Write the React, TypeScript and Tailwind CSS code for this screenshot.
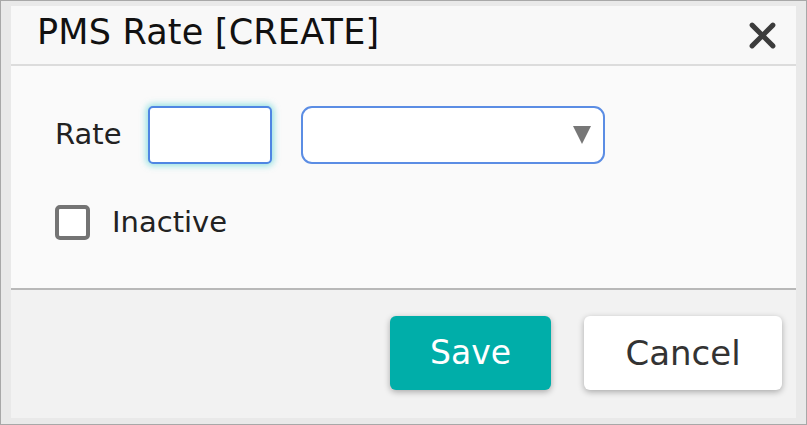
import React from 'react';

const font = { fontFamily: '"DejaVu Sans", "Open Sans", sans-serif' };

const CloseIcon: React.FC = () => (
  <svg width="27" height="27" viewBox="0 0 26 26" className="block">
    <path d="M3 3 L23 23 M23 3 L3 23" stroke="#3c3c3c" strokeWidth="4.8" strokeLinecap="round" />
  </svg>
);

const App: React.FC = () => {
  return (
    <div
      className="w-[807px] h-[425px] box-border bg-[#e9e9e9] border border-[#a8a8a8] pl-[10px] pr-[10px] pt-[5px] pb-[6px] overflow-hidden"
      style={font}
    >
      <div className="h-full flex flex-col">
        {/* header */}
        <div className="h-[60px] shrink-0 bg-[#f8f8f8] border-b-2 border-[#dcdcdc] flex items-center justify-between pl-[26px] pr-[20px] pb-[5px]">
          <h1 className="text-[35px] leading-none text-[#111] font-normal tracking-[0.2px]">PMS Rate [CREATE]</h1>
          <button className="p-0 mt-[6px]">
            <CloseIcon />
          </button>
        </div>

        {/* body */}
        <div className="h-[222px] shrink-0 bg-[#fafafa] pl-[44px] pt-[40px]">
          <div className="flex items-center">
            <label className="text-[29px] text-[#222] w-[93px]">Rate</label>
            <input
              type="text"
              className="w-[124px] h-[58px] rounded-[5px] border-2 border-[#4f86e3] bg-white outline-none shadow-[0_0_6px_2px_rgba(70,205,205,0.55)]"
            />
            <div className="ml-[29px] w-[304px] h-[58px] rounded-[11px] border-2 border-[#5b8de4] bg-white flex items-center justify-end pr-[12px]">
              <svg width="18" height="18" viewBox="0 0 18 18">
                <path d="M0 0 H18 L9 18 Z" fill="#777" />
              </svg>
            </div>
          </div>
          <div className="flex items-center mt-[37px]">
            <span className="w-[35px] h-[35px] rounded-[5px] border-[4px] border-[#747474] bg-white box-border blur-[0.6px]" />
            <span className="ml-[22px] text-[29px] text-[#222]">Inactive</span>
          </div>
        </div>

        {/* footer */}
        <div className="flex-1 bg-[#f2f2f2] border-t-2 border-[#b8b8b8] flex justify-end items-start pt-[26px] pr-[14px] gap-[33px]">
          <button className="w-[161px] h-[74px] rounded-[6px] bg-[#00aea9] text-white text-[33px] shadow-[0_2px_6px_rgba(0,0,0,0.3)]">
            Save
          </button>
          <button className="w-[198px] h-[74px] rounded-[6px] bg-white text-[#333] text-[34px] shadow-[0_2px_6px_rgba(0,0,0,0.3)]">
            Cancel
          </button>
        </div>
      </div>
    </div>
  );
};

export default App;
